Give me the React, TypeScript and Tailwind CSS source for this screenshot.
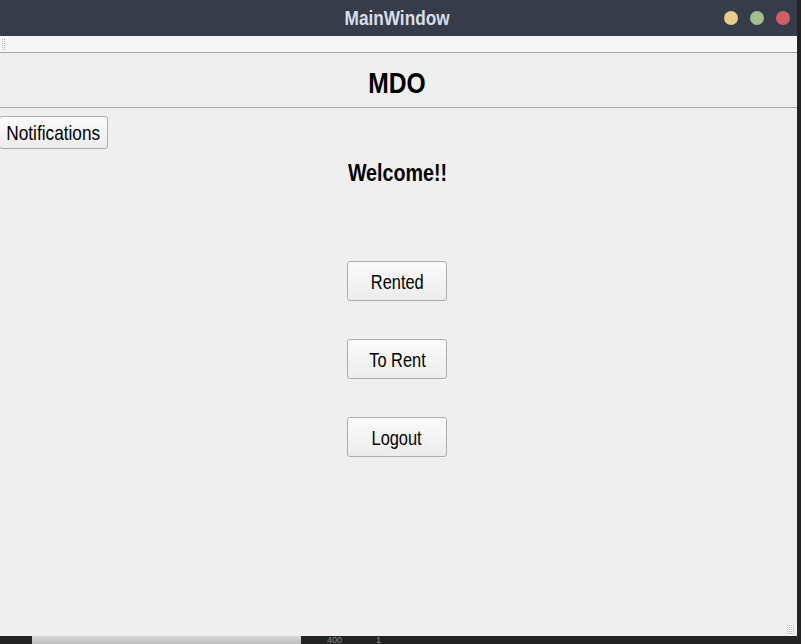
import React from 'react';

const font = "font-['Liberation_Sans','Arial',sans-serif]";

// Liberation Sans squeezed horizontally to get the narrow look of the original
function Narrow({ children, className = '' }: { children: React.ReactNode; className?: string }) {
  return <span className={`inline-block origin-center scale-x-[0.82] ${className}`}>{children}</span>;
}

function QtButton({ label, className = '' }: { label: string; className?: string }) {
  return (
    <button
      className={`flex items-center justify-center rounded-[3px] border border-[#adadad] bg-gradient-to-b from-[#fbfbfb] to-[#ececec] leading-[24px] text-black ${className}`}
    >
      <Narrow className="pt-[1px]">{label}</Narrow>
    </button>
  );
}

function GripDots({ cols, rows }: { cols: number; rows: number }) {
  return (
    <div className="grid gap-[1px]" style={{ gridTemplateColumns: `repeat(${cols}, 1px)` }}>
      {Array.from({ length: cols * rows }).map((_, i) => (
        <div key={i} className="h-[1px] w-[1px] bg-[#b8b8b8]" />
      ))}
    </div>
  );
}

export default function App() {
  return (
    <div className={`flex h-[644px] w-[801px] flex-col overflow-hidden bg-[#232323] ${font}`}>
      <div className="flex h-[636px] w-[797px] flex-col">
        {/* title bar */}
        <div className="relative flex h-[36px] items-center justify-center bg-[#363c4a] pr-[3px]">
          <Narrow className="scale-x-[0.8] text-[21px] font-bold leading-[24px] text-[#d8dee9]">MainWindow</Narrow>
          <div className="absolute right-[7px] top-[11px] flex gap-[12px]">
            <div className="h-[14px] w-[14px] rounded-full bg-[#ebcb8b]" />
            <div className="h-[14px] w-[14px] rounded-full bg-[#a3be8c]" />
            <div className="h-[14px] w-[14px] rounded-full bg-[#cf5f67]" />
          </div>
        </div>
        {/* toolbar */}
        <div className="flex h-[17px] items-center border-b border-[#a5a5a5] bg-[#f6f6f6] pl-[2px]">
          <GripDots cols={2} rows={6} />
        </div>
        {/* header */}
        <div className="flex h-[55px] items-center justify-center border-b border-[#a5a5a5] bg-[#efefef] pr-[3px]">
          <h1 className="pt-[5px] text-[30px] font-bold leading-[34px] text-black">
            <Narrow className="scale-x-[0.8]">MDO</Narrow>
          </h1>
        </div>
        {/* content */}
        <div className="relative flex flex-1 flex-col bg-[#efefef] pr-[3px]">
          <div className="pt-[8px]">
            <QtButton label="Notifications" className="ml-[-1px] h-[33px] w-[109px] text-[21px]" />
          </div>
          <h2 className="mt-[10px] text-center text-[24px] font-bold leading-[28px] text-black">
            <Narrow>Welcome!!</Narrow>
          </h2>
          <div className="mt-[74px] flex flex-col items-center gap-[38px]">
            <QtButton label="Rented" className="h-[40px] w-[100px] text-[20px]" />
            <QtButton label="To Rent" className="h-[40px] w-[100px] text-[20px]" />
            <QtButton label="Logout" className="h-[40px] w-[100px] text-[20px]" />
          </div>
          <div className="absolute bottom-[2px] right-[3px]">
            <GripDots cols={4} rows={5} />
          </div>
        </div>
      </div>
      {/* background behind the window */}
      <div className="flex h-[8px] items-start">
        <div className="ml-[32px] h-[8px] w-[269px] bg-gradient-to-b from-[#d6d6d6] to-[#bdbdbd]" />
        <span className="ml-[26px] text-[9px] leading-[8px] text-[#8a8a8a]">400</span>
        <span className="ml-[34px] text-[9px] leading-[8px] text-[#8a8a8a]">1</span>
      </div>
    </div>
  );
}
